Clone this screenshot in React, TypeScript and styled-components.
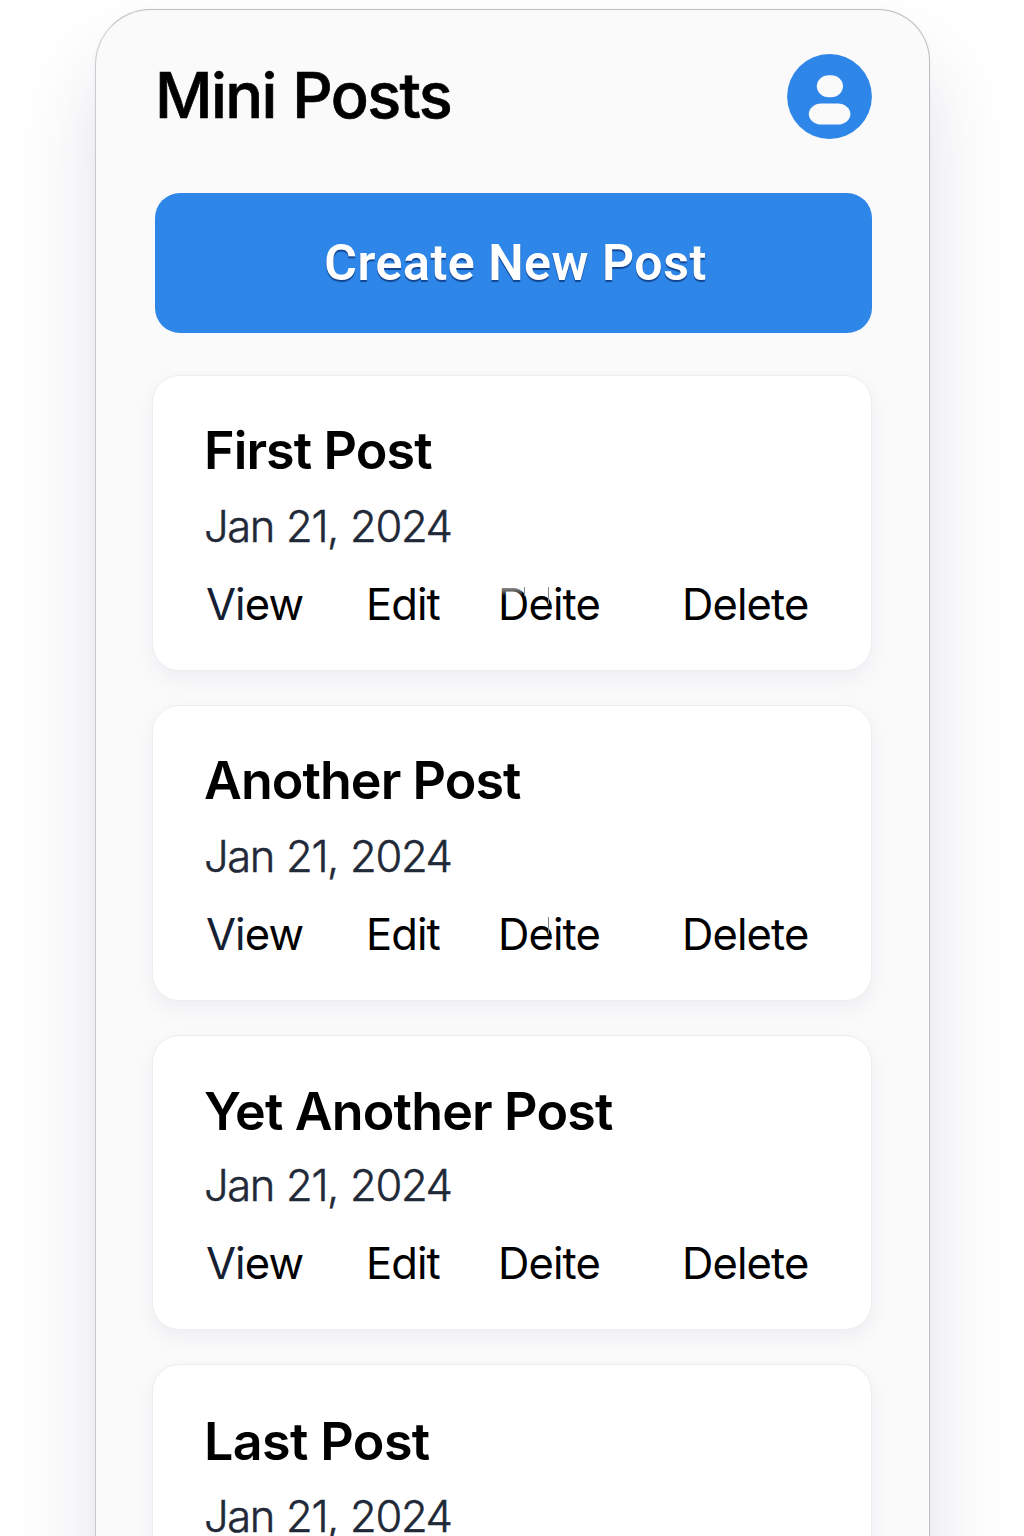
import React from 'react';
import styled, { createGlobalStyle } from 'styled-components';

const GlobalStyle = createGlobalStyle`
  * { box-sizing: border-box; }
  html { height: 100%; overflow: hidden; }
  body {
    margin: 0;
    height: 100%;
    overflow: hidden;
    background: #fefefe;
    font-family: Inter, "Liberation Sans", sans-serif;
    color: #000;
  }
`;

const Page = styled.div`
  display: flex;
  justify-content: center;
  height: 1536px;
  padding: 9px 0 0 1px;
  overflow: hidden;
`;

const Phone = styled.main`
  display: flex;
  flex-direction: column;
  flex: none;
  width: 835px;
  height: 1750px;
  padding: 44px 57px 0 56px;
  border: 1px solid #bfbfc1;
  border-left-color: #cbcbd1;
  border-radius: 56px 52px 0 0;
  background: #fafafb;
  box-shadow:
    0 0 2px rgba(90, 90, 130, 0.1),
    0 56px 70px rgba(70, 70, 120, 0.15);
`;

const Header = styled.header`
  display: flex;
  align-items: center;
  justify-content: space-between;
  height: 85px;
  padding: 0 0 0 3px;
`;

const Heading = styled.h1`
  margin: 0;
  padding-bottom: 3px;
  font-size: 63px;
  font-weight: 500;
  line-height: 72px;
  letter-spacing: -1.55px;
  word-spacing: 1px;
  -webkit-text-stroke: 0.7px #000;
`;

const AvatarButton = styled.button`
  width: 85px;
  height: 85px;
  padding: 0;
  border: 0;
  border-radius: 50%;
  background: none;
  line-height: 0;
`;

const CreateButton = styled.button`
  flex: none;
  height: 140px;
  margin: 54px 0 0 3px;
  padding: 0 0 0 4px;
  border: 0;
  border-radius: 25px;
  background: #2e87e8;
  color: #fff;
  font: 600 50px/60px Roboto, "Liberation Sans", sans-serif;
  letter-spacing: 0.55px;
  text-shadow: 0 2px 1px rgba(8, 45, 115, 0.75);
`;

const PostList = styled.section`
  display: flex;
  flex-direction: column;
  gap: 34px;
  padding-top: 42px;
`;

const Card = styled.article<{ $height: number; $drop: number }>`
  flex: none;
  height: ${(p) => p.$height}px;
  padding: ${(p) => 45 + p.$drop}px 50px 0 51px;
  border: 1px solid #ededf1;
  border-radius: 27px;
  background: #fff;
  box-shadow: 0 8px 18px rgba(60, 60, 110, 0.06);
`;

const PostTitle = styled.h2<{ $tracking: number }>`
  margin: 0;
  font-size: 52px;
  font-weight: 600;
  line-height: 60px;
  letter-spacing: ${(p) => p.$tracking}px;
`;

const PostDate = styled.time<{ $gap: number }>`
  display: block;
  margin-top: ${(p) => p.$gap}px;
  color: #1f2937;
  font-size: 43.5px;
  font-weight: 300;
  line-height: 52px;
  letter-spacing: -1.4px;
  word-spacing: 1.3px;
  -webkit-text-stroke: 0.5px #1f2937;
`;

const Actions = styled.nav`
  display: grid;
  grid-template-columns: 160px 132px 184px auto;
  margin-top: 26px;
  padding-left: 2px;
`;

const Action = styled.a`
  position: relative;
  color: #000;
  font-size: 43.5px;
  font-weight: 400;
  line-height: 52px;
  letter-spacing: -0.9px;
  white-space: nowrap;
`;

const Ink = styled.span`
  color: #152033;
`;

const Tick = styled.i<{ $x: number; $h: number }>`
  position: absolute;
  left: ${(p) => p.$x}px;
  top: 9px;
  width: 1px;
  height: ${(p) => p.$h}px;
  background: #888;
`;

const Fade = styled.i`
  position: absolute;
  left: 1px;
  top: 9px;
  width: 23px;
  height: 9px;
  background: linear-gradient(rgba(255, 255, 255, 0.6), rgba(255, 255, 255, 0.35), rgba(255, 255, 255, 0));
`;

interface Post {
  title: string;
  tracking: number;
  height: number;
  drop: number;
  gap: number;
  ticks: { x: number; h: number }[];
  faded?: boolean;
}

const posts: Post[] = [
  { title: 'First Post', tracking: -0.9, height: 296, drop: 0, gap: 19, ticks: [{ x: 26, h: 9 }, { x: 50, h: 17 }], faded: true },
  { title: 'Another Post', tracking: -0.95, height: 296, drop: 0, gap: 19, ticks: [{ x: 50, h: 17 }] },
  { title: 'Yet Another Post', tracking: -0.85, height: 295, drop: 1, gap: 17, ticks: [] },
  { title: 'Last Post', tracking: -0.6, height: 296, drop: 2, gap: 18, ticks: [] },
];

function Avatar() {
  return (
    <AvatarButton aria-label="Profile">
      <svg width="85" height="85" viewBox="0 0 85 85">
        <circle cx="42.5" cy="42.5" r="42.4" fill="#2e87e8" />
        <rect x="29.8" y="21.3" width="26.2" height="22" rx="12" ry="11" fill="#fafafb" />
        <rect x="21.8" y="49.6" width="41.6" height="21" rx="12.5" ry="10.5" fill="#fafafb" />
      </svg>
    </AvatarButton>
  );
}

function PostCard({ post }: { post: Post }) {
  return (
    <Card $height={post.height} $drop={post.drop}>
      <PostTitle $tracking={post.tracking}>{post.title}</PostTitle>
      <PostDate $gap={post.gap}>Jan 21, 2024</PostDate>
      <Actions>
        <Action><Ink>Vi</Ink>ew</Action>
        <Action>Edit</Action>
        <Action>
          Deite
          {post.faded && <Fade />}
          {post.ticks.map((t) => <Tick key={t.x} $x={t.x} $h={t.h} />)}
        </Action>
        <Action>Delete</Action>
      </Actions>
    </Card>
  );
}

export default function App() {
  return (
    <Page>
      <GlobalStyle />
      <Phone>
        <Header>
          <Heading>Mini Posts</Heading>
          <Avatar />
        </Header>
        <CreateButton>Create New Post</CreateButton>
        <PostList>
          {posts.map((post) => <PostCard key={post.title} post={post} />)}
        </PostList>
      </Phone>
    </Page>
  );
}
